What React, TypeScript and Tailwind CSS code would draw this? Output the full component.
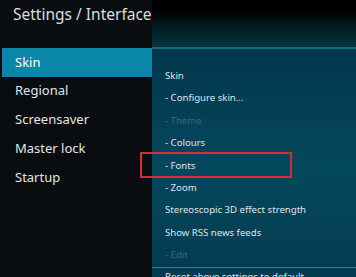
import React from "react";

export default function App() {
  const menu = ["Skin", "Regional", "Screensaver", "Master lock", "Startup"];
  const items = [
    { label: "Skin", off: false },
    { label: "- Configure skin...", off: false },
    { label: "- Theme", off: true },
    { label: "- Colours", off: false },
    { label: "- Fonts", off: false },
    { label: "- Zoom", off: false },
    { label: "Stereoscopic 3D effect strength", off: false },
    { label: "Show RSS news feeds", off: false },
    { label: "- Edit", off: true },
  ];

  return (
    <div
      className="relative w-[356px] h-[277px] overflow-hidden flex bg-black"
      style={{ fontFamily: '"Noto Sans", "Open Sans", sans-serif' }}
    >
      {/* left column */}
      <div className="w-[152px] shrink-0 flex flex-col bg-[#0a0d10] pl-[2px]">
        <div className="h-[48px] shrink-0 pl-[11px] pt-[2px] relative z-10">
          <span className="whitespace-nowrap text-[15.5px] text-[#dcdcdc]">
            Settings / Interface
          </span>
        </div>
        {menu.map((m, i) => (
          <div
            key={m}
            className={`h-[28.75px] flex items-center pl-[13px] text-[13px] ${
              i === 0 ? "bg-[#0a87a7] text-white" : "text-[#e4e4e4]"
            }`}
          >
            {m}
          </div>
        ))}
      </div>

      {/* right column */}
      <div className="flex-1 flex flex-col">
        <div className="h-[47px] shrink-0 bg-gradient-to-b from-[#000000] via-[#01161b] to-[#03343d]" />
        <div className="h-[2px] shrink-0 bg-[#0d7088]" />
        <div className="flex-1 flex flex-col bg-gradient-to-b from-[#02364a] via-[#04485e] to-[#033a50] pt-[16px]">
          {items.map((it) => (
            <div
              key={it.label}
              className={`h-[22.4px] flex items-center pl-[13px] text-[9.6px] whitespace-nowrap ${
                it.off ? "text-[#356b80]" : "text-[#dfe6e8]"
              }`}
            >
              {it.label}
            </div>
          ))}
          <div className="h-[1px] bg-[#4a7888]" />
          <div className="pl-[13px] pt-[2px] text-[9.6px] text-[#dfe6e8] whitespace-nowrap">
            Reset above settings to default
          </div>
        </div>
      </div>

      {/* annotation highlight */}
      <div className="absolute left-[140px] top-[152px] w-[152px] h-[26px] border-2 border-[#dc2a2e]" />
    </div>
  );
}
